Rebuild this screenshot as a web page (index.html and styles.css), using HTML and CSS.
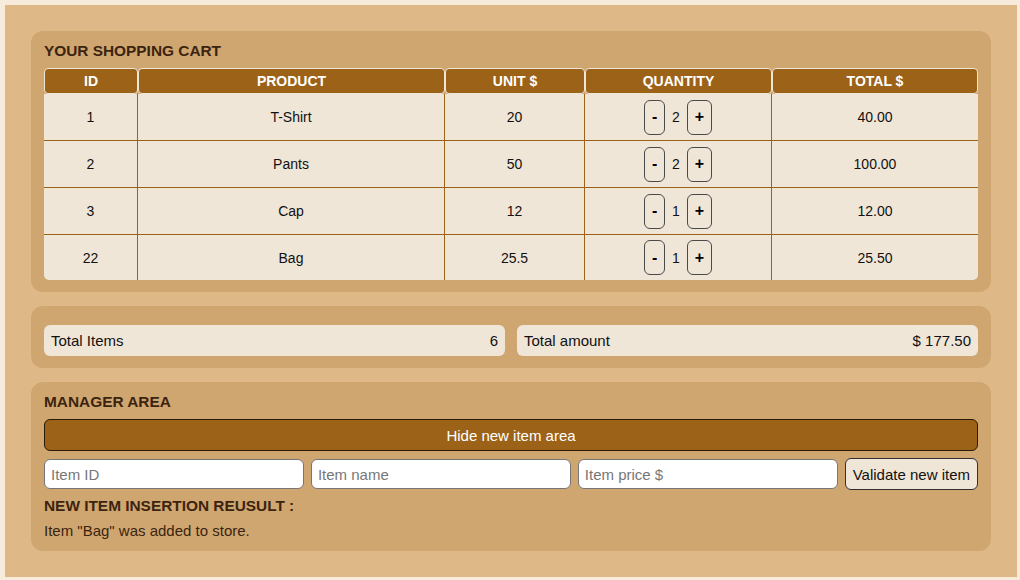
FILE: index.html
```html
<!DOCTYPE html>
<html lang="en">
<head>
<meta charset="utf-8">
<title>Shopping cart</title>
<link rel="stylesheet" href="styles.css">
</head>
<body>
<div class="app">
  <section class="card cart">
    <h2 class="title">YOUR SHOPPING CART</h2>
    <table class="cart-table">
      <colgroup>
        <col class="c-id"><col class="c-prod"><col class="c-unit"><col class="c-qty"><col class="c-total">
      </colgroup>
      <thead>
        <tr><th>ID</th><th>PRODUCT</th><th>UNIT $</th><th>QUANTITY</th><th>TOTAL $</th></tr>
      </thead>
      <tbody>
        <tr>
          <td>1</td><td>T-Shirt</td><td>20</td>
          <td><div class="qty"><button class="qbtn minus">-</button><span>2</span><button class="qbtn plus">+</button></div></td>
          <td>40.00</td>
        </tr>
        <tr>
          <td>2</td><td>Pants</td><td>50</td>
          <td><div class="qty"><button class="qbtn minus">-</button><span>2</span><button class="qbtn plus">+</button></div></td>
          <td>100.00</td>
        </tr>
        <tr>
          <td>3</td><td>Cap</td><td>12</td>
          <td><div class="qty"><button class="qbtn minus">-</button><span>1</span><button class="qbtn plus">+</button></div></td>
          <td>12.00</td>
        </tr>
        <tr>
          <td>22</td><td>Bag</td><td>25.5</td>
          <td><div class="qty"><button class="qbtn minus">-</button><span>1</span><button class="qbtn plus">+</button></div></td>
          <td>25.50</td>
        </tr>
      </tbody>
    </table>
  </section>

  <section class="card totals">
    <div class="total-box"><span>Total Items</span><span>6</span></div>
    <div class="total-box"><span>Total amount</span><span>$ 177.50</span></div>
  </section>

  <section class="card manager">
    <h2 class="title">MANAGER AREA</h2>
    <button class="toggle">Hide new item area</button>
    <div class="new-item">
      <input class="field" type="text" placeholder="Item ID">
      <input class="field" type="text" placeholder="Item name">
      <input class="field" type="text" placeholder="Item price $">
      <button class="validate">Validate new item</button>
    </div>
    <h3 class="title result-title">NEW ITEM INSERTION REUSULT :</h3>
    <p class="result">Item "Bag" was added to store.</p>
  </section>
</div>
</body>
</html>
```

FILE: styles.css
```css
* { box-sizing: border-box; }

body {
  margin: 5px 3px 3px 5px;
  background: #f7ecdc;
  font-family: "Liberation Sans", Arial, sans-serif;
  font-size: 15px;
  color: #111;
}

.app {
  background: #deb887;
  padding: 26px;
  display: flex;
  flex-direction: column;
  gap: 14px;
}

.card {
  background: #d0a670;
  border-radius: 12px;
  padding: 10px 13px 12px;
}

.title {
  margin: 0 0 7px;
  font-size: 15.4px;
  line-height: 20px;
  font-weight: bold;
  color: #3b240f;
}

/* table */
.cart-table {
  width: 100%;
  border-collapse: separate;
  border-spacing: 0;
  table-layout: fixed;
  font-size: 14px;
}
.c-id { width: 94px; }
.c-prod { width: 307px; }
.c-unit { width: 140px; }
.c-qty { width: 187px; }
.c-total { width: 206px; }

.cart-table th {
  background: #9c6318;
  color: #fff;
  font-weight: bold;
  font-size: 14px;
  height: 26px;
  padding: 0;
  border: 1px solid #f0e6d8;
  border-radius: 4px;
  text-align: center;
}

.cart-table td {
  background: #f0e6d8;
  text-align: center;
  height: 47px;
  padding: 0;
  border-right: 1px solid #9c6318;
  border-bottom: 1px solid #9c6318;
  color: #111;
}
.cart-table td:last-child { border-right: none; }
.cart-table tbody tr:last-child td { border-bottom: none; height: 45px; }
.cart-table tbody tr:last-child td:first-child { border-bottom-left-radius: 5px; }
.cart-table tbody tr:last-child td:last-child { border-bottom-right-radius: 5px; }

.qty {
  display: flex;
  align-items: center;
  justify-content: center;
  gap: 7px;
}
.qbtn {
  height: 35px;
  padding: 0;
  border: 1px solid #4a4a4a;
  border-radius: 6px;
  background: transparent;
  font-family: "Liberation Sans", Arial, sans-serif;
  font-weight: bold;
  font-size: 16px;
  color: #000;
  line-height: 1;
}
.qbtn.minus { width: 21px; }
.qbtn.plus { width: 25px; }

/* totals */
.totals {
  display: flex;
  gap: 12px;
  padding: 19px 13px 12px;
}
.total-box {
  flex: 1;
  height: 31px;
  background: #f0e6d8;
  border-radius: 6px;
  padding: 0 7px;
  display: flex;
  align-items: center;
  justify-content: space-between;
  font-size: 15px;
}

/* manager */
.manager { padding-bottom: 10px; }
.toggle {
  display: block;
  width: 100%;
  height: 32px;
  background: #9c6318;
  color: #fff;
  border: 1px solid #2a1a08;
  border-radius: 6px;
  font-family: "Liberation Sans", Arial, sans-serif;
  font-size: 15px;
}
.new-item {
  display: flex;
  align-items: center;
  gap: 7px;
  margin-top: 7px;
}
.field {
  flex: 1;
  min-width: 0;
  height: 30px;
  background: #fff;
  border: 1px solid #767676;
  border-radius: 6px;
  padding: 0 6px;
  font-family: "Liberation Sans", Arial, sans-serif;
  font-size: 15px;
  color: #111;
}
.field::placeholder { color: #777; }
.validate {
  height: 32px;
  padding: 0 7px;
  background: #f0e6d8;
  border: 1px solid #2f2f2f;
  border-radius: 6px;
  font-family: "Liberation Sans", Arial, sans-serif;
  font-size: 15px;
  color: #111;
}
.result-title {
  margin: 6px 0 5px;
}
.result {
  margin: 0;
  line-height: 20px;
  font-size: 15px;
  color: #3b240f;
}
```
